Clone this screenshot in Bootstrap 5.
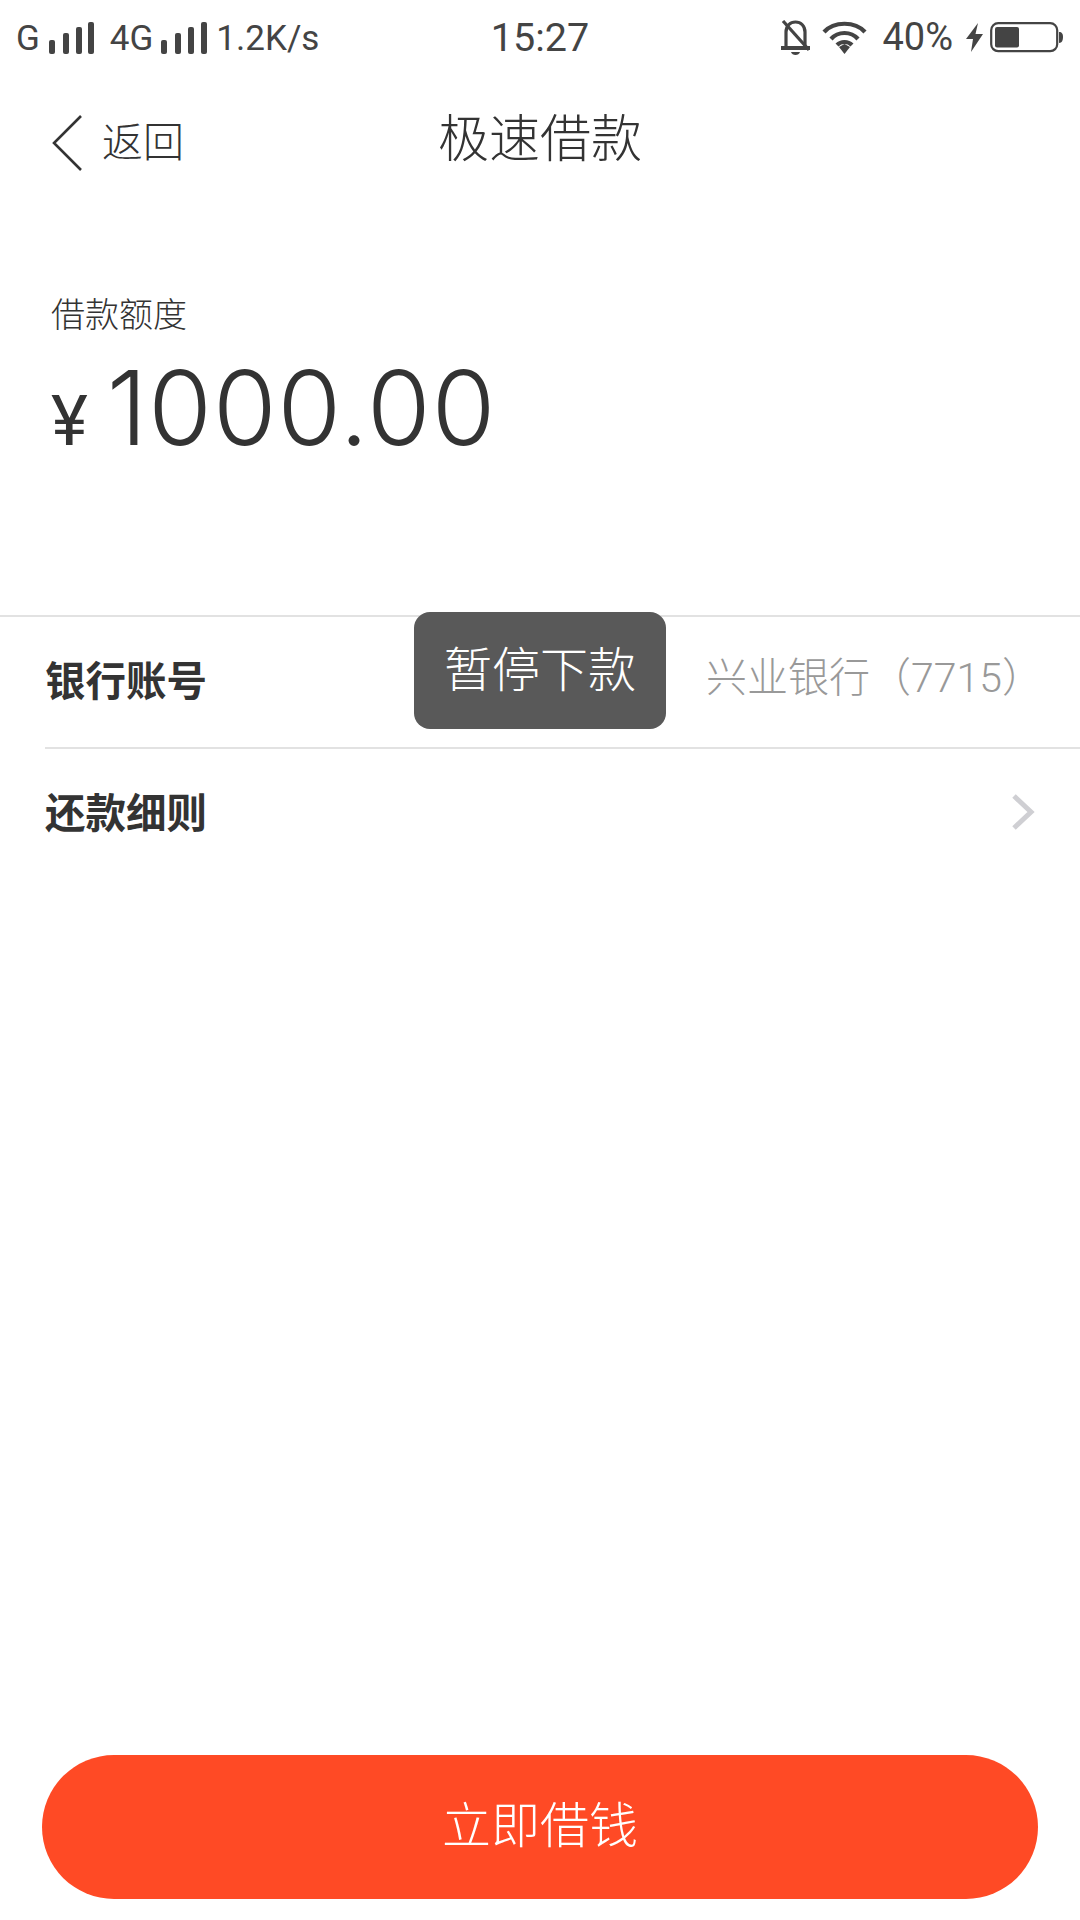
<!DOCTYPE html>
<html lang="zh"><head><meta charset="utf-8">
<link href="https://cdn.jsdelivr.net/npm/bootstrap@5.3.0/dist/css/bootstrap.min.css" rel="stylesheet">
<style>
html,body{margin:0;background:#fff}
body{font-family:Roboto,"Noto Sans CJK SC",sans-serif;color:#333}
.screen{width:1080px;height:1920px;position:relative;overflow:hidden}
.sbar{height:75px;padding:0 16px 0 16px;color:#444;font-size:35px;position:relative}
.sbar-txt{position:relative;top:2px}
.clock{position:absolute;left:0;right:0;text-align:center;font-size:39.5px;top:15px;line-height:46px}
.sig-g{margin-left:9px}
.net-4g{margin-left:16px}
.sig-4g{margin-left:8px}
.speed{margin-left:9px}
.ic-wifi{margin-left:12px}
.batt-pct{margin-left:15px;font-size:38px}
.ic-bolt{margin-left:13px}
.ic-batt{margin-left:7px}
.topnav{height:130px;position:relative;padding-left:52px}
.ic-back{margin-top:5px}
.back-txt{font-size:41px;font-weight:300;margin-left:19px;line-height:1;margin-top:6px;color:#333}
.title{position:absolute;left:0;right:0;top:35px;text-align:center;font-size:51px;font-weight:300;line-height:60px}
.quota{padding:90px 0 0 51px;height:410px}
.q-label{font-size:34px;font-weight:300;line-height:40px}
.q-amt{font-family:Inter,Roboto,sans-serif;font-size:103px;font-weight:300;line-height:120px;margin-top:13px;letter-spacing:1px}
.q-cur{font-family:Roboto,sans-serif;font-size:70px;margin-right:19px;font-weight:400;letter-spacing:0}
.rows{border-top:2px solid #e2e2e2}
.rowitem{height:132px;margin-left:45px;padding-right:45px}
.rowitem.first-row{height:130px}
.rowitem+.rowitem{border-top:2px solid #e2e2e2}
.r-name{font-size:40.5px;font-weight:700;color:#333}
.r-val{font-size:41px;font-weight:300;color:#999;margin-bottom:6px;margin-right:-8px}
.ic-more{margin-bottom:4px}
.toast-box{position:absolute;left:414px;top:612px;width:252px;height:117px;background:#595959;color:#fff;border-radius:16px;font-size:48px;font-weight:300;display:flex;align-items:center;justify-content:center}
.cta{position:absolute;left:42px;right:42px;top:1755px;height:144px;border-radius:72px;background:#ff4a25;color:#fff;font-size:49px;font-weight:300;border:0}
.cta:hover{background:#ff4a25;color:#fff}
</style></head>
<body>
<div class="screen d-flex flex-column">
 <div class="sbar d-flex justify-content-between align-items-center">
  <div class="d-flex align-items-center">
   <span class="sbar-txt">G</span>
   <svg class="sig-g" width="45" height="32" viewBox="0 0 45 32" fill="#444"><rect x="0" y="18" width="6" height="14" rx="2"/><rect x="14" y="11" width="6" height="21" rx="2"/><rect x="27" y="5" width="6" height="27" rx="2"/><rect x="39" y="0" width="6" height="32" rx="2"/></svg>
   <span class="net-4g sbar-txt">4G</span>
   <svg class="sig-4g" width="46" height="32" viewBox="0 0 46 32" fill="#444"><rect x="0" y="18" width="6" height="14" rx="2"/><rect x="14" y="11" width="6" height="21" rx="2"/><rect x="27" y="5" width="6" height="27" rx="2"/><rect x="40" y="0" width="6" height="32" rx="2"/></svg>
   <span class="speed sbar-txt">1.2K/s</span>
  </div>
  <div class="clock">15:27</div>
  <div class="d-flex align-items-center">
   <svg width="29" height="35" viewBox="0 0 29 35" fill="none" stroke="#444" stroke-width="3.2"><path d="M5 27V12C5 6 9 2 14.500 2S24 6 24 12v15"/><path d="M0 28h29" stroke-width="4"/><path d="M2 1l26 29"/><path d="M10 32h9c-1 4-8 4-9 0z" fill="#444" stroke="none"/></svg>
   <svg class="ic-wifi" width="45" height="33" viewBox="0 0 45 33" fill="none" stroke="#444" stroke-width="4.200"><path d="M2 11C12 0 33 0 43 11"/><path d="M9 18C16 10 29 10 36 18"/><path d="M15 24C19 20 26 20 30 24"/><path d="M17 26l5.500-3 5.500 3-5.500 7z" fill="#444" stroke="none"/></svg>
   <span class="batt-pct">40%</span>
   <svg class="ic-bolt" width="17" height="29" viewBox="0 0 17 29" fill="#444"><path d="M12 0L0 16h7L5 29 17 11H9.500z"/></svg>
   <svg class="ic-batt" width="74" height="31" viewBox="0 0 74 31"><rect x="1.200" y="1.200" width="66" height="28" rx="7" fill="none" stroke="#444" stroke-width="2.200"/><rect x="5" y="5" width="24" height="20.500" rx="2" fill="#444"/><path d="M69 10c3 0 4 2 4 5s-1 6-4 6z" fill="#444"/></svg>
  </div>
 </div>
 <div class="topnav d-flex align-items-center">
  <svg class="ic-back" width="31" height="56" viewBox="0 0 31 56" fill="none" stroke="#333" stroke-width="2.600"><path d="M29 1L2 28l27 27"/></svg>
  <span class="back-txt">返回</span>
  <div class="title">极速借款</div>
 </div>
 <div class="quota">
  <div class="q-label">借款额度</div>
  <div class="q-amt d-flex align-items-baseline"><span class="q-cur">¥</span><span>1000.00</span></div>
 </div>
 <div class="rows">
  <div class="rowitem first-row d-flex justify-content-between align-items-center"><span class="r-name">银行账号</span><span class="r-val">兴业银行（7715）</span></div>
  <div class="rowitem d-flex justify-content-between align-items-center"><span class="r-name">还款细则</span>
   <svg class="ic-more" width="24" height="36" viewBox="0 0 24 36" fill="none" stroke="#cfcfd3" stroke-width="5"><path d="M3 2l17 16L3 34"/></svg></div>
 </div>
 <div class="toast-box">暂停下款</div>
 <button class="btn cta" type="button">立即借钱</button>
</div>
</body></html>
